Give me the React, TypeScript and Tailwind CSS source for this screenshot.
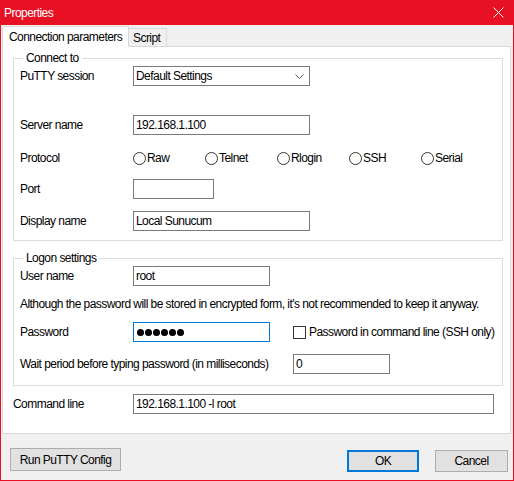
import { ReactNode } from "react";

const font = { fontFamily: '"Liberation Sans", Arial, sans-serif' };

function TextBox({ value, width, focused }: { value?: string; width: string; focused?: boolean }) {
  return (
    <div
      className={`${width} h-[20px] shrink-0 bg-white border flex items-center pl-[2px] text-black ${
        focused ? "border-[#0078D7]" : "border-[#7A7A7A]"
      }`}
    >
      {value}
    </div>
  );
}

function Row({ label, children, className = "" }: { label: string; children: ReactNode; className?: string }) {
  return (
    <div className={`flex items-center h-[20px] ${className}`}>
      <span className="w-[113px] shrink-0">{label}</span>
      {children}
    </div>
  );
}

function Radio({ label }: { label: string }) {
  return (
    <div className="w-[72px] shrink-0 flex items-center gap-[1px]">
      <span className="w-[13px] h-[13px] rounded-full border border-[#333] bg-white" />
      <span>{label}</span>
    </div>
  );
}

function GroupBox({ title, children, className = "" }: { title: string; children: ReactNode; className?: string }) {
  return (
    <fieldset className={`border border-[#DCDCDC] ml-[10px] mr-[7px] px-[6px] ${className}`}>
      <legend className="ml-[3px] px-[3px] leading-[14px]">{title}</legend>
      {children}
    </fieldset>
  );
}

function Button({ children, primary, className = "" }: { children: ReactNode; primary?: boolean; className?: string }) {
  return (
    <button
      className={`h-[22px] bg-[#E1E1E1] text-black flex items-center justify-center ${
        primary ? "border-2 border-[#0078D7]" : "border border-[#ADADAD]"
      } ${className}`}
    >
      {children}
    </button>
  );
}

export default function App() {
  return (
    <div
      className="w-[514px] h-[481px] bg-[#E81123] px-px pb-px flex flex-col text-[12px] tracking-[-0.55px] text-black whitespace-nowrap"
      style={font}
    >
      {/* title bar */}
      <div className="h-[25px] shrink-0 flex items-center justify-between pl-[3px] pr-[9px] text-white">
        <span>Properties</span>
        <svg width="11" height="11" viewBox="0 0 11 11" fill="none" stroke="white" strokeWidth="1">
          <path d="M0.5 0.5 L10.5 10.5 M10.5 0.5 L0.5 10.5" />
        </svg>
      </div>

      <div className="flex-1 bg-[#F0F0F0] flex flex-col">
        {/* tabs */}
        <div className="flex items-end h-[21px] ml-px">
          <div className="w-[127px] h-[21px] pl-[6px] bg-white border border-b-0 border-[#D9D9D9] flex items-center relative -mb-px z-10">
            Connection parameters
          </div>
          <div className="w-[38px] h-[18px] pl-[4px] bg-[#F0F0F0] border border-l-0 border-b-0 border-[#D9D9D9] flex items-center">
            Script
          </div>
        </div>

        {/* tab page */}
        <div className="h-[388px] ml-px mr-[2px] bg-white border border-[#D9D9D9] flex flex-col pt-[4px]">
          <GroupBox title="Connect to" className="h-[190px]">
            <Row label="PuTTY session" className="mt-[1px]">
              <div className="w-[177px] h-[20px] shrink-0 bg-white border border-[#7A7A7A] flex items-center justify-between pl-[2px] pr-[5px]">
                <span>Default Settings</span>
                <svg width="9" height="5" viewBox="0 0 9 5" fill="none" stroke="#555" strokeWidth="1">
                  <path d="M0.5 0.5 L4.5 4.5 L8.5 0.5" />
                </svg>
              </div>
            </Row>
            <Row label="Server name" className="mt-[29px]">
              <TextBox value="192.168.1.100" width="w-[177px]" />
            </Row>
            <Row label="Protocol" className="mt-[13px]">
              <Radio label="Raw" />
              <Radio label="Telnet" />
              <Radio label="Rlogin" />
              <Radio label="SSH" />
              <Radio label="Serial" />
            </Row>
            <Row label="Port" className="mt-[11px]">
              <TextBox width="w-[81px]" />
            </Row>
            <Row label="Display name" className="mt-[12px]">
              <TextBox value="Local Sunucum" width="w-[177px]" />
            </Row>
          </GroupBox>

          <GroupBox title="Logon settings" className="h-[135px] mt-[10px]">
            <Row label="User name" className="mt-[1px]">
              <TextBox value="root" width="w-[137px]" />
            </Row>
            <div className="h-[20px] flex items-center mt-[8px]">
              Although the password will be stored in encrypted form, it's not recommended to keep it anyway.
            </div>
            <Row label="Password" className="mt-[8px]">
              <div className="w-[137px] h-[20px] shrink-0 bg-white border border-[#0078D7] flex items-center gap-[1px] pl-[3px]">
                {[0, 1, 2, 3, 4, 5].map((i) => (
                  <span key={i} className="w-[7px] h-[7px] rounded-full bg-black" />
                ))}
              </div>
              <div className="flex items-center ml-[23px] gap-[3px]">
                <span className="w-[13px] h-[13px] border border-[#333] bg-white" />
                <span>Password in command line (SSH only)</span>
              </div>
            </Row>
            <div className="flex items-center h-[20px] mt-[12px]">
              <span className="w-[273px] shrink-0">Wait period before typing password (in milliseconds)</span>
              <TextBox value="0" width="w-[97px]" />
            </div>
          </GroupBox>

          <div className="flex items-center h-[20px] mt-[8px] ml-[10px]">
            <span className="w-[120px] shrink-0">Command line</span>
            <TextBox value="192.168.1.100 -l root" width="w-[361px]" />
          </div>
        </div>

        {/* dialog buttons */}
        <div className="flex items-start pl-[9px] pr-[5px] mt-[14px]">
          <Button className="w-[111px] h-[23px]">Run PuTTY Config</Button>
          <div className="ml-auto flex gap-[16px] mt-[2px]">
            <Button primary className="w-[72px]">OK</Button>
            <Button className="w-[73px]">Cancel</Button>
          </div>
        </div>
      </div>
    </div>
  );
}
